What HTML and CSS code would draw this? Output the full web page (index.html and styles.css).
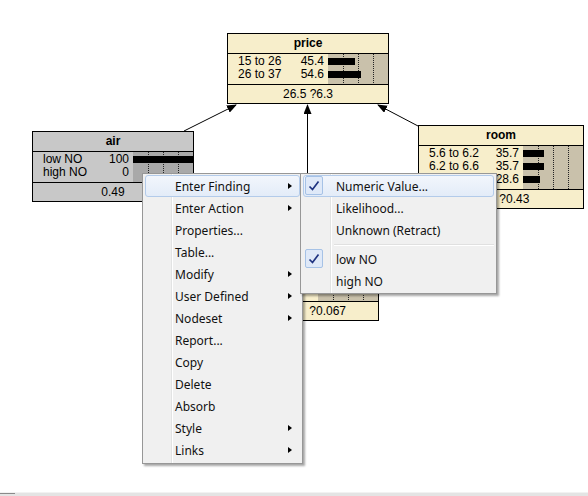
FILE: index.html
```html
<!DOCTYPE html>
<html>
<head>
<meta charset="utf-8">
<link rel="stylesheet" href="styles.css">
</head>
<body>
<div class="canvas">
  <svg class="links" width="588" height="496" viewBox="0 0 588 496">
    <defs>
      <marker id="ah" markerWidth="10" markerHeight="8" refX="9" refY="4" orient="auto" markerUnits="userSpaceOnUse">
        <path d="M0 0 L10 4 L0 8 Z" fill="#000"/>
      </marker>
    </defs>
    <line x1="184" y1="131" x2="236" y2="105" stroke="#000" stroke-width="1" marker-end="url(#ah)"/>
    <line x1="307.5" y1="250" x2="307.5" y2="105" stroke="#000" stroke-width="1" marker-end="url(#ah)"/>
    <line x1="418" y1="126" x2="378" y2="105" stroke="#000" stroke-width="1" marker-end="url(#ah)"/>
  </svg>

  <div class="node node-price">
    <div class="node-title">price</div>
    <div class="node-states">
      <div class="state-text">
        <span class="lbl">15 to 26</span><span class="val">45.4</span>
        <span class="lbl">26 to 37</span><span class="val">54.6</span>
      </div>
      <div class="bars">
        <div class="bar-row"><div class="bar" style="width:45.4%"></div></div>
        <div class="bar-row"><div class="bar" style="width:54.6%"></div></div>
      </div>
    </div>
    <div class="node-foot">26.5 ?6.3</div>
  </div>

  <div class="node node-air grey">
    <div class="node-title">air</div>
    <div class="node-states">
      <div class="state-text">
        <span class="lbl">low NO</span><span class="val">100</span>
        <span class="lbl">high NO</span><span class="val">0</span>
      </div>
      <div class="bars">
        <div class="bar-row"><div class="bar" style="width:100%"></div></div>
        <div class="bar-row"><div class="bar" style="width:0%"></div></div>
      </div>
    </div>
    <div class="node-foot">0.49</div>
  </div>

  <div class="node node-room">
    <div class="node-title">room</div>
    <div class="node-states">
      <div class="state-text">
        <span class="lbl">5.6 to 6.2</span><span class="val">35.7</span>
        <span class="lbl">6.2 to 6.6</span><span class="val">35.7</span>
        <span class="lbl">6.6 to 8.8</span><span class="val">28.6</span>
      </div>
      <div class="bars">
        <div class="bar-row"><div class="bar" style="width:35.7%"></div></div>
        <div class="bar-row"><div class="bar" style="width:35.7%"></div></div>
        <div class="bar-row"><div class="bar" style="width:28.6%"></div></div>
      </div>
    </div>
    <div class="node-foot">6.27 ?0.43</div>
  </div>

  <div class="node node-nox">
    <div class="node-title"></div>
    <div class="node-states">
      <div class="state-text"></div>
      <div class="bars">
        <div class="bar-row"><div class="bar" style="width:0%"></div></div>
        <div class="bar-row"><div class="bar" style="width:0%"></div></div>
      </div>
    </div>
    <div class="node-foot foot-right">?0.067</div>
  </div>

  <div class="menu main-menu">
    <div class="item hl">Enter Finding<span class="sub-arrow"></span></div>
    <div class="item">Enter Action<span class="sub-arrow"></span></div>
    <div class="item">Properties...</div>
    <div class="item">Table...</div>
    <div class="item">Modify<span class="sub-arrow"></span></div>
    <div class="item">User Defined<span class="sub-arrow"></span></div>
    <div class="item">Nodeset<span class="sub-arrow"></span></div>
    <div class="item">Report...</div>
    <div class="item">Copy</div>
    <div class="item">Delete</div>
    <div class="item">Absorb</div>
    <div class="item">Style<span class="sub-arrow"></span></div>
    <div class="item">Links<span class="sub-arrow"></span></div>
  </div>

  <div class="menu sub-menu">
    <div class="item hl"><span class="check"><svg width="12" height="12" viewBox="0 0 12 12"><path d="M1.5 6.5 L4.5 9.5 L10.5 1.5" fill="none" stroke="#1f3380" stroke-width="1.7"/></svg></span>Numeric Value...</div>
    <div class="item">Likelihood...</div>
    <div class="item">Unknown (Retract)</div>
    <div class="sep"></div>
    <div class="item"><span class="check"><svg width="12" height="12" viewBox="0 0 12 12"><path d="M1.5 6.5 L4.5 9.5 L10.5 1.5" fill="none" stroke="#1f3380" stroke-width="1.7"/></svg></span>low NO</div>
    <div class="item">high NO</div>
  </div>

  <div class="bottom-bar"><div class="bottom-thumb"></div></div>
</div>
</body>
</html>
```

FILE: styles.css
```css
html, body {
  margin: 0;
  padding: 0;
  background: #fff;
}

.canvas {
  position: relative;
  width: 588px;
  height: 496px;
  overflow: hidden;
  font-family: "Liberation Sans", Arial, sans-serif;
  font-size: 12px;
  color: #000;
}

.links {
  position: absolute;
  left: 0;
  top: 0;
}

.node {
  position: absolute;
  box-sizing: border-box;
  border: 1px solid #000;
  background: #f7eecb;
  line-height: 13px;
}

.node-price { left: 227px; top: 33px; width: 162px; }
.node-air { left: 32px; top: 131px; width: 162px; }
.node-room { left: 418px; top: 125px; width: 166px; }
.node-nox { left: 236px; top: 250px; width: 143px; }

.node-title {
  height: 19px;
  line-height: 19px;
  text-align: center;
  font-weight: bold;
  border-bottom: 1px solid #000;
}

.node-states {
  display: flex;
  border-bottom: 1px solid #000;
}

.state-text {
  flex: 1;
  display: grid;
  grid-template-columns: auto 1fr;
  grid-auto-rows: 13px;
  padding: 1px 4px 3px 10px;
}

.val { text-align: right; }

.bars {
  width: 60px;
  padding: 1px 0 3px;
  background-color: #c9c1ab;
  background-image:
    linear-gradient(#222 50%, transparent 50%),
    linear-gradient(#222 50%, transparent 50%),
    linear-gradient(#222 50%, transparent 50%);
  background-size: 1px 2px;
  background-repeat: repeat-y;
  background-position: 15px 0, 30px 0, 45px 0;
}

.grey { background: #c8c8c8; }
.grey .bars { background-color: #a9a9a9; }

.bar-row {
  height: 13px;
  display: flex;
  align-items: center;
}

.bar {
  height: 7px;
  background: #000;
}

.node-foot {
  height: 18px;
  line-height: 18px;
  text-align: center;
}

.foot-right {
  text-align: right;
  padding-right: 32px;
}

.menu {
  position: absolute;
  box-sizing: border-box;
  background-color: #f0f0f0;
  border: 1px solid #979797;
  box-shadow: 2px 2px 2px rgba(0, 0, 0, 0.35);
  padding: 0 2px 1px;
  font-family: "Noto Sans", "Open Sans", sans-serif;
  font-size: 12px;
  color: #111;
}

.main-menu {
  left: 142px;
  top: 173px;
  width: 161px;
  height: 291px;
  background-image: linear-gradient(to right, transparent 28px, #e2e3e3 28px, #e2e3e3 29px, #fff 29px, #fff 30px, transparent 30px);
}

.sub-menu {
  left: 300px;
  top: 173px;
  width: 197px;
  height: 121px;
  background-image: linear-gradient(to right, transparent 29px, #e2e3e3 29px, #e2e3e3 30px, #fff 30px, #fff 31px, transparent 31px);
}

.item {
  position: relative;
  box-sizing: border-box;
  height: 22px;
  line-height: 21px;
  padding-left: 29px;
  border: 1px solid transparent;
  border-radius: 3px;
}

.main-menu .item:first-child { margin-top: 1px; }

.sub-menu .item { padding-left: 32px; }
.sub-menu .item:first-child { margin-top: 1px; }

.item.hl {
  background: linear-gradient(#f2f6fc, #e3ecf8);
  border-color: #b3cbea;
}

.sub-arrow {
  position: absolute;
  right: 7px;
  top: 7px;
  width: 0;
  height: 0;
  border-top: 3.5px solid transparent;
  border-bottom: 3.5px solid transparent;
  border-left: 4px solid #000;
}

.check {
  position: absolute;
  left: 1px;
  top: 0;
  width: 18px;
  height: 19px;
  box-sizing: border-box;
  border: 1px solid #a6c2e6;
  border-radius: 2px;
  background: #dfe9f8;
  display: flex;
  align-items: center;
  justify-content: center;
}

.sep {
  height: 7px;
  margin-left: 31px;
  background: linear-gradient(transparent 3px, #e0e0e0 3px, #e0e0e0 4px, #fff 4px, #fff 5px, transparent 5px);
}

.bottom-bar {
  position: absolute;
  left: 0;
  bottom: 0;
  width: 588px;
  height: 3px;
  background: #e4e4e4;
  border-top: 1px solid #f2f2f2;
}

.bottom-thumb {
  width: 15px;
  height: 1px;
  background: #8a8a8a;
}
```
